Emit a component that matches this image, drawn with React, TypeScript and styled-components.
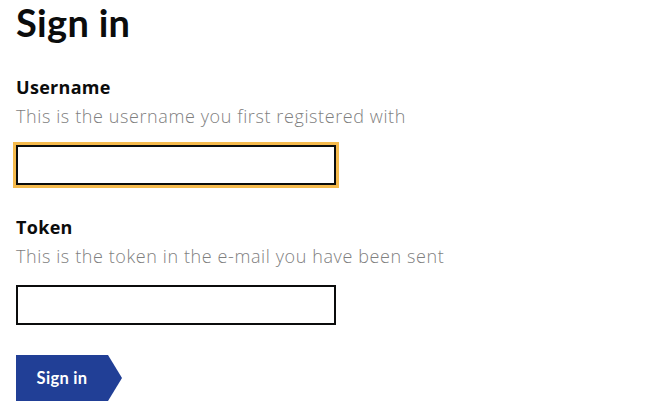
import React from "react";
import styled, { createGlobalStyle } from "styled-components";

const GlobalStyle = createGlobalStyle`
  html, body {
    margin: 0;
    padding: 0;
    background: #ffffff;
  }
  body {
    font-family: Lato, "Liberation Sans", sans-serif;
    color: #0b0c0c;
  }
`;

const Page = styled.main`
  display: flex;
  flex-direction: column;
  padding: 0 16px;
`;

const Heading = styled.h1`
  margin: 0;
  font-size: 38px;
  line-height: 44px;
  font-weight: 700;
  letter-spacing: 0.3px;
  color: #0b0c0c;
`;

const Form = styled.form`
  display: flex;
  flex-direction: column;
  gap: 30px;
  margin-top: 31px;
`;

const Field = styled.div`
  display: flex;
  flex-direction: column;
  align-items: flex-start;
`;

const Label = styled.label`
  font-family: "Open Sans", Lato, sans-serif;
  font-size: 18px;
  line-height: 24px;
  font-weight: 700;
  letter-spacing: 0.3px;
  color: #0b0c0c;
`;

const Hint = styled.span`
  margin-top: 5px;
  font-family: "Open Sans", Lato, sans-serif;
  font-size: 18px;
  line-height: 24px;
  font-weight: 300;
  letter-spacing: 0.6px;
  color: #7f7f7f;
`;

const Input = styled.input<{ $focused?: boolean }>`
  box-sizing: border-box;
  margin-top: 17px;
  width: 320px;
  height: 40px;
  border: 2px solid #0b0c0c;
  border-radius: 0;
  padding: 4px;
  font: inherit;
  font-size: 18px;
  outline: none;
  box-shadow: ${(p) => (p.$focused ? "0 0 0 3px #f5ba4c" : "none")};
`;

const Button = styled.button`
  box-sizing: border-box;
  align-self: flex-start;
  width: 106px;
  height: 46px;
  padding: 0 14px 0 0;
  border: 0;
  background: #213f96;
  color: #ffffff;
  font-family: inherit;
  font-size: 16.5px;
  font-weight: 700;
  letter-spacing: 0.3px;
  cursor: pointer;
  clip-path: polygon(0 0, 92px 0, 106px 50%, 92px 100%, 0 100%);
`;

export default function App() {
  return (
    <>
      <GlobalStyle />
      <Page>
        <Heading>Sign in</Heading>
        <Form onSubmit={(e) => e.preventDefault()}>
          <Field>
            <Label htmlFor="username">Username</Label>
            <Hint>This is the username you first registered with</Hint>
            <Input id="username" type="text" $focused />
          </Field>
          <Field>
            <Label htmlFor="token">Token</Label>
            <Hint>This is the token in the e-mail you have been sent</Hint>
            <Input id="token" type="text" />
          </Field>
          <Button type="submit">Sign in</Button>
        </Form>
      </Page>
    </>
  );
}
